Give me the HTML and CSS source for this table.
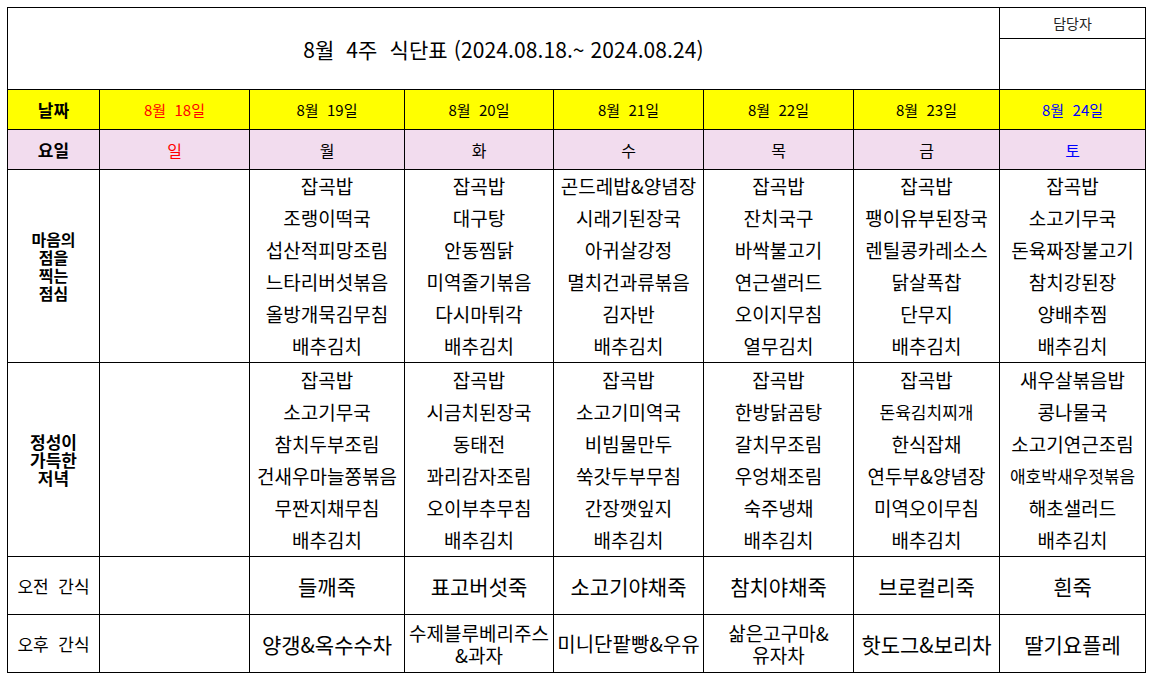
FILE: index.html
```html
<!DOCTYPE html>
<html lang="ko">
<head>
<meta charset="utf-8">
<title>8월 4주 식단표</title>
<link rel="stylesheet" href="styles.css">
</head>
<body>
<div class="page">
<table class="menu">
  <colgroup>
    <col class="c-label">
    <col class="c-d1">
    <col class="c-d2">
    <col class="c-d3">
    <col class="c-d4">
    <col class="c-d5">
    <col class="c-d6">
    <col class="c-d7">
  </colgroup>
  <tr class="r-title-a">
    <td class="title" colspan="7" rowspan="2">8월&nbsp; 4주&nbsp; 식단표 (2024.08.18.~ 2024.08.24)</td>
    <td class="manager">담당자</td>
  </tr>
  <tr class="r-title-b">
    <td class="sign"></td>
  </tr>
  <tr class="r-date">
    <th class="rowhead">날짜</th>
    <td class="sun">8월&nbsp; 18일</td>
    <td>8월&nbsp; 19일</td>
    <td>8월&nbsp; 20일</td>
    <td>8월&nbsp; 21일</td>
    <td>8월&nbsp; 22일</td>
    <td>8월&nbsp; 23일</td>
    <td class="sat">8월&nbsp; 24일</td>
  </tr>
  <tr class="r-day">
    <th class="rowhead">요일</th>
    <td class="sun">일</td>
    <td>월</td>
    <td>화</td>
    <td>수</td>
    <td>목</td>
    <td>금</td>
    <td class="sat">토</td>
  </tr>
  <tr class="r-lunch">
    <th class="meal-head lunch-head">마음의<br>점을<br>찍는<br>점심</th>
    <td class="meal"></td>
    <td class="meal"><div>잡곡밥</div><div>조랭이떡국</div><div>섭산적피망조림</div><div>느타리버섯볶음</div><div>올방개묵김무침</div><div>배추김치</div></td>
    <td class="meal"><div>잡곡밥</div><div>대구탕</div><div>안동찜닭</div><div>미역줄기볶음</div><div>다시마튀각</div><div>배추김치</div></td>
    <td class="meal"><div>곤드레밥&amp;양념장</div><div>시래기된장국</div><div>아귀살강정</div><div>멸치건과류볶음</div><div>김자반</div><div>배추김치</div></td>
    <td class="meal"><div>잡곡밥</div><div>잔치국구</div><div>바싹불고기</div><div>연근샐러드</div><div>오이지무침</div><div>열무김치</div></td>
    <td class="meal"><div>잡곡밥</div><div>팽이유부된장국</div><div>렌틸콩카레소스</div><div>닭살폭찹</div><div>단무지</div><div>배추김치</div></td>
    <td class="meal"><div>잡곡밥</div><div>소고기무국</div><div>돈육짜장불고기</div><div>참치강된장</div><div>양배추찜</div><div>배추김치</div></td>
  </tr>
  <tr class="r-dinner">
    <th class="meal-head dinner-head">정성이<br>가득한<br>저녁</th>
    <td class="meal"></td>
    <td class="meal"><div>잡곡밥</div><div>소고기무국</div><div>참치두부조림</div><div>건새우마늘쫑볶음</div><div>무짠지채무침</div><div>배추김치</div></td>
    <td class="meal"><div>잡곡밥</div><div>시금치된장국</div><div>동태전</div><div>꽈리감자조림</div><div>오이부추무침</div><div>배추김치</div></td>
    <td class="meal"><div>잡곡밥</div><div>소고기미역국</div><div>비빔물만두</div><div>쑥갓두부무침</div><div>간장깻잎지</div><div>배추김치</div></td>
    <td class="meal"><div>잡곡밥</div><div>한방닭곰탕</div><div>갈치무조림</div><div>우엉채조림</div><div>숙주냉채</div><div>배추김치</div></td>
    <td class="meal"><div>잡곡밥</div><div class="small">돈육김치찌개</div><div>한식잡채</div><div>연두부&amp;양념장</div><div>미역오이무침</div><div>배추김치</div></td>
    <td class="meal"><div>새우살볶음밥</div><div>콩나물국</div><div>소고기연근조림</div><div class="small">애호박새우젓볶음</div><div>해초샐러드</div><div>배추김치</div></td>
  </tr>
  <tr class="r-snack">
    <th class="snack-head">오전&nbsp; 간식</th>
    <td class="snack"></td>
    <td class="snack">들깨죽</td>
    <td class="snack">표고버섯죽</td>
    <td class="snack">소고기야채죽</td>
    <td class="snack">참치야채죽</td>
    <td class="snack">브로컬리죽</td>
    <td class="snack">흰죽</td>
  </tr>
  <tr class="r-snack">
    <th class="snack-head">오후&nbsp; 간식</th>
    <td class="snack"></td>
    <td class="snack">양갱&amp;옥수수차</td>
    <td class="snack two">수제블루베리주스<br>&amp;과자</td>
    <td class="snack narrow">미니단팥빵&amp;우유</td>
    <td class="snack two">삶은고구마&amp;<br>유자차</td>
    <td class="snack">핫도그&amp;보리차</td>
    <td class="snack">딸기요플레</td>
  </tr>
</table>
</div>
</body>
</html>
```

FILE: styles.css
```css
html, body {
  margin: 0;
  padding: 0;
  background: #ffffff;
}

body {
  font-family: "Noto Sans CJK KR", "Noto Sans", sans-serif;
  color: #000000;
}

.page {
  padding: 7px 0 0 7px;
}

.menu {
  border-collapse: collapse;
  table-layout: fixed;
  width: 1138px;
}

.menu td,
.menu th {
  border: 1px solid #000000;
  padding: 0;
  text-align: center;
  vertical-align: middle;
  overflow: hidden;
  white-space: nowrap;
}

.c-label { width: 92px; }
.c-d1 { width: 150px; }
.c-d2 { width: 155px; }
.c-d3 { width: 149px; }
.c-d4 { width: 150px; }
.c-d5 { width: 150px; }
.c-d6 { width: 146px; }
.c-d7 { width: 146px; }

.r-title-a { height: 31px; }
.r-title-b { height: 51px; }
.r-date { height: 40px; }
.r-day { height: 40px; }
.r-lunch { height: 193px; }
.r-dinner { height: 194px; }
.r-snack { height: 58px; }

.title {
  font-size: 21px;
  font-weight: 400;
  letter-spacing: 0.1px;
}

.manager {
  font-size: 14px;
  color: #222222;
}

.r-date td,
.r-date th {
  background: #ffff00;
  font-size: 15px;
}

.r-day td,
.r-day th {
  background: #f2dcee;
  font-size: 16px;
}

.rowhead {
  font-size: 17px !important;
  font-weight: 700;
}

.sun { color: #ff0000; }
.sat { color: #0000ff; }

.meal-head {
  font-size: 17px;
  font-weight: 700;
  line-height: 18px;
}

.lunch-head {
  font-size: 16px;
}

.meal {
  font-size: 19px;
  line-height: 32px;
}

.meal .small {
  font-size: 17px;
}

.snack-head {
  font-size: 17px;
  font-weight: 400;
}

.snack {
  font-size: 21px;
}

.snack.two {
  font-size: 19px;
  line-height: 22px;
}

.snack.narrow {
  font-size: 20px;
}
```
